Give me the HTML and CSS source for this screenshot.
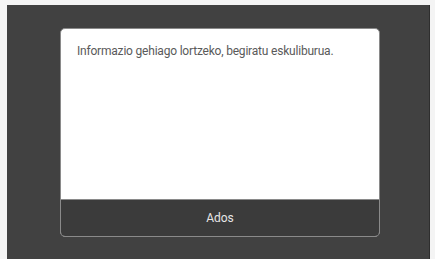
FILE: index.html
```html
<!DOCTYPE html>
<html>
<head>
<meta charset="utf-8">
<link rel="stylesheet" href="styles.css">
</head>
<body>
<div class="screen">
  <div class="dialog">
    <div class="message">Informazio gehiago lortzeko, begiratu eskuliburua.</div>
    <div class="actions">Ados</div>
  </div>
</div>
</body>
</html>
```
FILE: styles.css
```css
html, body {
  margin: 0;
  padding: 0;
  background: #f4f4f4;
  width: 435px;
  height: 259px;
  overflow: hidden;
}
.screen {
  box-sizing: border-box;
  margin: 5px 5px 0 7px;
  height: 254px;
  background: #414141;
  padding: 23px 0 0 53px;
  border-right: 1px solid #2e2e2e;
}
.dialog {
  width: 320px;
  height: 209px;
  display: flex;
  flex-direction: column;
  border-radius: 5px;
  overflow: hidden;
  border: 1px solid #8a8a8a;
  box-sizing: border-box;
  background: #fff;
}
.message {
  flex: 1;
  padding: 15px 16px;
  font-family: Roboto, "Liberation Sans", sans-serif;
  font-size: 12px;
  color: #5a5a5a;
  letter-spacing: -0.2px;
}
.actions {
  height: 36px;
  background: #3b3b3b;
  border-top: 1px solid #8a8a8a;
  color: #e6e6e6;
  font-family: Roboto, "Liberation Sans", sans-serif;
  font-size: 12px;
  display: flex;
  align-items: center;
  justify-content: center;
}
```
